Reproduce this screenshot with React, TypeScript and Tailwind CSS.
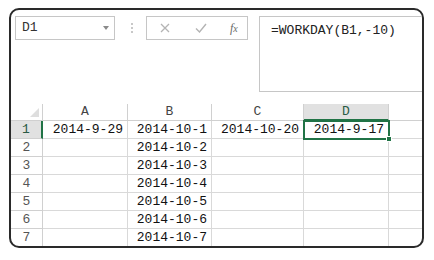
import React from "react";

const cols = ["A", "B", "C", "D", "E"];
const rows: string[][] = [
  ["2014-9-29", "2014-10-1", "2014-10-20", "2014-9-17", ""],
  ["", "2014-10-2", "", "", ""],
  ["", "2014-10-3", "", "", ""],
  ["", "2014-10-4", "", "", ""],
  ["", "2014-10-5", "", "", ""],
  ["", "2014-10-6", "", "", ""],
  ["", "2014-10-7", "", "", ""],
];

const mono = { fontFamily: '"Liberation Mono", "DejaVu Sans Mono", monospace' };

export default function App() {
  return (
    <div className="w-[434px] h-[260px] bg-white pt-[8px] pl-[9px]" style={mono}>
      <div className="w-[415px] h-[240px] border-2 border-[#2a2a2a] rounded-[10px] overflow-hidden flex flex-col">
        {/* formula bar */}
        <div className="flex items-start pt-[6px] pl-[4px] h-[94px] shrink-0">
          <div className="w-[100px] h-[24px] border border-[#c6c6c6] flex items-center pl-[6px] pr-[5px] text-[13px] text-[#333]">
            <span className="flex-1">D1</span>
            <span className="w-0 h-0 border-l-[3.5px] border-r-[3.5px] border-t-[4px] border-l-transparent border-r-transparent border-t-[#8a8a8a]" />
          </div>
          <div className="ml-[16px] mt-[7px] flex flex-col gap-[2px]">
            <span className="w-[2px] h-[2px] bg-[#c8c8c8]" />
            <span className="w-[2px] h-[2px] bg-[#c8c8c8]" />
            <span className="w-[2px] h-[2px] bg-[#c8c8c8]" />
          </div>
          <div className="ml-[13px] w-[102px] h-[24px] border border-[#c6c6c6] flex items-center">
            <svg className="ml-[13px]" width="10" height="10" viewBox="0 0 10 10">
              <path d="M1 1 L9 9 M9 1 L1 9" stroke="#b4b4b4" strokeWidth="1.3" />
            </svg>
            <svg className="ml-[25px]" width="12" height="10" viewBox="0 0 12 10">
              <path d="M1 5.5 L4.5 9 L11 1" stroke="#b4b4b4" strokeWidth="1.4" fill="none" />
            </svg>
            <span
              className="ml-[23px] text-[12px] italic text-[#6a6a6a]"
              style={{ fontFamily: '"Liberation Serif", serif' }}
            >
              f<span className="text-[10px]">x</span>
            </span>
          </div>
          <div className="ml-[11px] flex-1 h-[76px] border border-r-0 border-[#c6c6c6] pl-[11px] pt-[4px] text-[13px] text-[#222]">
            =WORKDAY(B1,-10)
          </div>
        </div>

        {/* sheet */}
        <div className="relative w-[470px] grid grid-cols-[32px_85px_84px_92px_85px_85px] grid-rows-[17px_repeat(7,18px)] text-[13px]">
          <div className="relative border-r border-b border-[#d0d0d0]">
            <span className="absolute right-[3px] bottom-[3px] w-0 h-0 border-l-[9px] border-l-transparent border-b-[9px] border-b-[#dedede]" />
          </div>
          {cols.map((c) => (
            <div
              key={c}
              className={
                c === "D"
                  ? "flex items-center justify-center bg-[#e1e1e1] border-r border-[#d0d0d0] border-b-2 border-b-[#217346] text-[#2a5a44]"
                  : "flex items-center justify-center border-r border-b border-[#d0d0d0] text-[#444]"
              }
            >
              {c}
            </div>
          ))}
          {rows.map((r, i) => (
            <React.Fragment key={i}>
              <div
                className={
                  i === 0
                    ? "flex items-center justify-center bg-[#e1e1e1] border-b border-[#d0d0d0] border-r-2 border-r-[#217346] text-[#2a5a44]"
                    : "flex items-center justify-center border-r border-b border-[#d0d0d0] text-[#555]"
                }
              >
                {i + 1}
              </div>
              {r.map((v, j) => (
                <div
                  key={j}
                  className="flex items-center justify-end pr-[4px] border-r border-b border-[#d9d9d9] text-[#111]"
                >
                  {v}
                </div>
              ))}
            </React.Fragment>
          ))}
          {/* selected cell D1 */}
          <div className="absolute left-[292px] top-[16px] w-[87px] h-[20px] border-2 border-[#217346] pointer-events-none">
            <span className="absolute right-[-4px] bottom-[-4px] w-[6px] h-[6px] bg-[#217346] border border-white" />
          </div>
        </div>
      </div>
    </div>
  );
}
